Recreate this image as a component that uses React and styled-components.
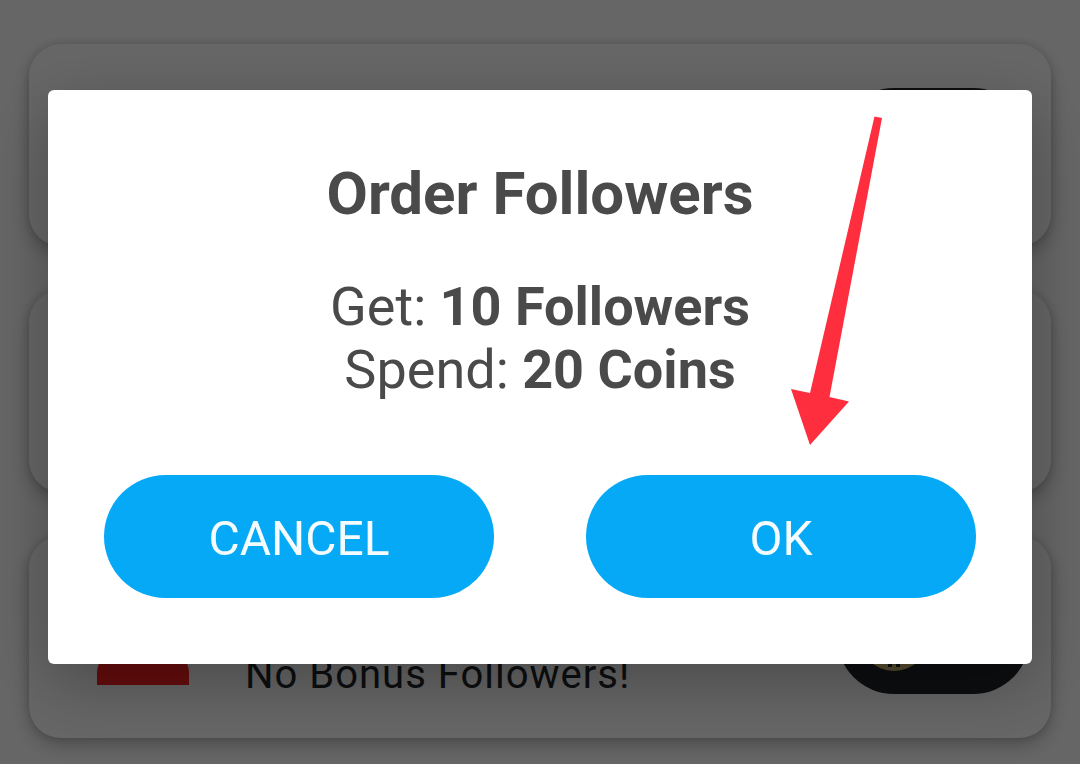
import React from "react";
import styled, { createGlobalStyle } from "styled-components";

const GlobalStyle = createGlobalStyle`
  *, *::before, *::after { box-sizing: border-box; }
  html, body { margin: 0; background: #ffffff; }
  body {
    font-family: Roboto, "Liberation Sans", sans-serif;
    overflow: hidden;
  }
`;

const OfferList = styled.main`
  display: flex;
  flex-direction: column;
  gap: 44px;
  padding: 44px 29px 26px;
`;

const OfferCard = styled.section`
  display: flex;
  align-items: center;
  gap: 56px;
  min-height: 202px;
  padding: 0 21px 0 68px;
  border-radius: 32px;
  background: #ffffff;
  box-shadow: 0 8px 18px rgba(0, 0, 0, 0.24), 0 0 8px rgba(0, 0, 0, 0.14);
`;

const PersonIcon = styled.svg`
  flex: none;
  align-self: flex-end;
  width: 92px;
  height: 96px;
  margin-bottom: 53px;
`;

const OfferNote = styled.p`
  align-self: flex-end;
  margin: 0 0 39px;
  color: #202326;
  font-size: 40px;
  line-height: 48px;
  letter-spacing: 1px;
  white-space: nowrap;
`;

const PricePill = styled.div`
  display: flex;
  align-items: center;
  flex: none;
  width: 193px;
  height: 114px;
  margin-left: auto;
  padding-left: 21px;
  border-radius: 57px;
  background: #202326;
`;

const CoinIcon = styled.svg`
  width: 72px;
  height: 72px;
`;

const Scrim = styled.div`
  position: fixed;
  inset: 0;
  display: flex;
  align-items: flex-start;
  padding: 90px 48px;
  background: rgba(0, 0, 0, 0.6);
`;

const Dialog = styled.div`
  position: relative;
  flex: 1;
  padding: 69px 56px 66px;
  border-radius: 6px;
  background: #ffffff;
  color: #4a4a4a;
  text-align: center;
  box-shadow: 0 20px 64px rgba(0, 0, 0, 0.28);
`;

const Title = styled.h1`
  margin: 0;
  font-size: 60px;
  line-height: 70px;
  font-weight: 700;
`;

const Summary = styled.p`
  margin: 46px 0 0;
  font-size: 54px;
  line-height: 63px;
`;

const Line = styled.span`
  display: block;
`;

const Actions = styled.div`
  display: grid;
  grid-template-columns: 1fr 1fr;
  gap: 92px;
  margin-top: 74px;
`;

const ActionButton = styled.button`
  height: 123px;
  padding: 4px 0 0;
  border: 0;
  border-radius: 62px;
  background: #05a9f5;
  color: #f4fcff;
  font-family: inherit;
  font-size: 48px;
  line-height: 56px;
  cursor: pointer;
`;

const Arrow = styled.svg`
  position: absolute;
  top: 26px;
  right: 150px;
  width: 91px;
  height: 329px;
  pointer-events: none;
`;

function Price({ coin }) {
  return (
    <PricePill>
      {coin && (
        <CoinIcon viewBox="0 0 72 72" aria-hidden="true">
          <circle cx="36" cy="35" r="35" fill="#d9bd78" />
          <circle cx="36" cy="35" r="28" fill="none" stroke="#b89a50" strokeWidth="2" />
          <path d="M32 8v58M40 8v58" stroke="#202326" strokeWidth="4" />
          <path
            d="M48 22c-4-5-23-7-23 4 0 12 23 6 23 18 0 11-20 9-25 3"
            fill="none"
            stroke="#202326"
            strokeWidth="5"
          />
        </CoinIcon>
      )}
    </PricePill>
  );
}

export default function App() {
  return (
    <>
      <GlobalStyle />
      <OfferList>
        <OfferCard>
          <Price />
        </OfferCard>
        <OfferCard>
          <Price />
        </OfferCard>
        <OfferCard>
          <PersonIcon viewBox="0 0 92 96" aria-hidden="true">
            <circle cx="46" cy="26" r="24" fill="#ff2020" />
            <path d="M0 96V84C0 66 18 58 46 58S92 66 92 84V96Z" fill="#ff2020" />
          </PersonIcon>
          <OfferNote>No Bonus Followers!</OfferNote>
          <Price coin />
        </OfferCard>
      </OfferList>
      <Scrim>
        <Dialog role="dialog" aria-modal="true" aria-labelledby="order-title">
          <Title id="order-title">Order Followers</Title>
          <Summary>
            <Line>
              Get: <b>10 Followers</b>
            </Line>
            <Line>
              Spend: <b>20 Coins</b>
            </Line>
          </Summary>
          <Actions>
            <ActionButton type="button">CANCEL</ActionButton>
            <ActionButton type="button">OK</ActionButton>
          </Actions>
          <Arrow viewBox="0 0 91 329" aria-hidden="true">
            <path d="M83.5 0.5L91 2L38.5 281L58 285.5L19 329L0 273L19 277Z" fill="#ff2e3e" />
          </Arrow>
        </Dialog>
      </Scrim>
    </>
  );
}
